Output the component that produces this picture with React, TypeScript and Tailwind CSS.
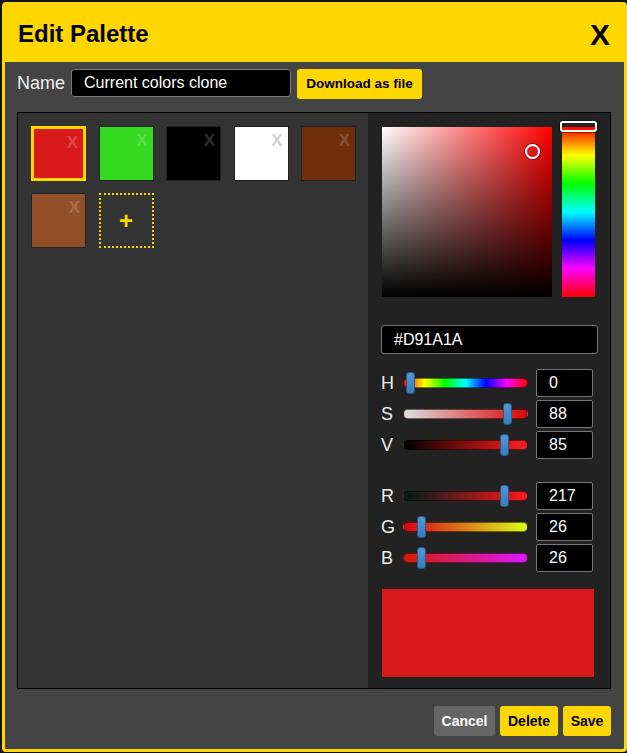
import React from "react";

const swatches = [
  { c: "bg-[#d91a1a]", sel: true, light: false },
  { c: "bg-[#35d91f]", sel: false, light: false },
  { c: "bg-[#000000]", sel: false, light: false },
  { c: "bg-[#ffffff]", sel: false, light: true },
  { c: "bg-[#6e2e0b]", sel: false, light: false },
  { c: "bg-[#925028]", sel: false, light: false },
];

type Row = { l: string; v: string; f: number; g: string };

const hsv: Row[] = [
  { l: "H", v: "0", f: 0, g: "bg-[linear-gradient(to_right,#f00,#ff0,#0f0,#0ff,#00f,#f0f,#f00)]" },
  { l: "S", v: "88", f: 0.88, g: "bg-[linear-gradient(to_right,#dedede,#dd0505)]" },
  { l: "V", v: "85", f: 0.85, g: "bg-[linear-gradient(to_right,#000,#ff1f1f)]" },
];

const rgb: Row[] = [
  { l: "R", v: "217", f: 217 / 255, g: "bg-[linear-gradient(to_right,#001a1a,#ff1a1a)]" },
  { l: "G", v: "26", f: 26 / 255, g: "bg-[linear-gradient(to_right,#d9001a,#d9ff1a)]" },
  { l: "B", v: "26", f: 26 / 255, g: "bg-[linear-gradient(to_right,#d91a00,#d91aff)]" },
];

function SliderRow({ r }: { r: Row }) {
  return (
    <div className="flex items-center h-[28px]">
      <div className="w-[22px] text-[18px] text-[#eee] leading-none">{r.l}</div>
      <div className="relative w-[125px] h-[10px]">
        <div className={`absolute inset-0 rounded-full border border-black/50 ${r.g}`} />
        <div
          className="absolute top-[-6px] w-[9px] h-[22px] rounded-[3px] border border-[#245b8c] bg-[linear-gradient(to_bottom,#5196d6,#3a7cbc)]"
          style={{ left: `${2.5 + r.f * 111}px` }}
        />
      </div>
      <div className="ml-[8px] w-[57px] h-[28px] bg-black border border-[#777] rounded-[2px] pl-[12px] flex items-center text-[16px] text-white">
        {r.v}
      </div>
    </div>
  );
}

export default function App() {
  return (
    <div className="w-[627px] h-[753px] bg-[#111] pt-[2px] pl-[2px] font-['Liberation_Sans',Arial,sans-serif] overflow-hidden">
      <div className="w-[625px] h-[750px] border-[3px] border-[#ffd700] rounded-[4px] bg-[#444] flex flex-col overflow-hidden">
        {/* Header */}
        <div className="h-[57px] shrink-0 bg-[#ffd700] flex items-center justify-between pl-[13px] pr-[14px]">
          <div className="text-[24px] font-bold text-black leading-none">Edit Palette</div>
          <div className="text-[30px] font-bold text-black leading-none mt-[2px]">X</div>
        </div>

        {/* Name row */}
        <div className="flex items-start pl-[12px] mt-[7px]">
          <div className="h-[28px] flex items-center text-[18px] text-[#eee] leading-none">Name</div>
          <div className="ml-[6px] w-[220px] h-[28px] bg-black border border-[#777] rounded-[3px] pl-[12px] flex items-center text-[16px] text-white">
            Current colors clone
          </div>
          <div className="ml-[6px] w-[125px] h-[30px] bg-[#ffd700] rounded-[3px] flex items-center justify-center text-[13.5px] font-bold text-black">
            Download as file
          </div>
        </div>

        {/* Main panel */}
        <div className="ml-[12px] mt-[13px] w-[594px] h-[577px] border border-black flex">
          <div className="w-[350px] bg-[#333] pl-[13px] pt-[13px]">
            <div className="flex flex-wrap gap-x-[12.5px] gap-y-[12px]">
              {swatches.map((s, i) => (
                <div
                  key={i}
                  className={`relative w-[55px] h-[55px] box-border ${s.c} ${
                    s.sel ? "border-[3px] border-[#ffd700]" : "border border-[#222]"
                  }`}
                >
                  <span
                    className={`absolute top-[5px] right-[5px] text-[17px] font-bold leading-none ${
                      s.light ? "text-black/20" : "text-white/20"
                    } ${s.sel ? "top-[4px] right-[3px]" : ""}`}
                  >
                    X
                  </span>
                </div>
              ))}
              <div className="w-[55px] h-[55px] box-border border-2 border-dotted border-[#ffd700] flex items-center justify-center">
                <span className="text-[24px] font-bold text-[#ffd700] leading-none">+</span>
              </div>
            </div>
          </div>

          <div className="flex-1 bg-[#222] pl-[13px] pt-[14px]">
            <div className="flex ml-[1px]">
              <div className="relative w-[170px] h-[170px] bg-[linear-gradient(to_right,#fff,#f00)]">
                <div className="absolute inset-0 bg-[linear-gradient(to_top,#000,transparent)]" />
                <div className="absolute left-[143px] top-[17px] w-[15px] h-[15px] rounded-full border-2 border-white shadow-[0_0_1px_1px_rgba(0,0,0,0.4)]" />
              </div>
              <div className="relative ml-[10px] w-[33px] h-[170px] bg-[linear-gradient(to_bottom,#f00,#ff0,#0f0,#0ff,#00f,#f0f,#f00)]">
                <div className="absolute top-[-6px] left-[-2px] w-[37px] h-[11px] rounded-[3px] border-2 border-white shadow-[0_0_1px_1px_rgba(0,0,0,0.5)]" />
              </div>
            </div>

            <div className="mt-[28px] w-[217px] h-[29px] bg-black border border-[#777] rounded-[3px] pl-[12px] flex items-center text-[16px] text-white">
              #D91A1A
            </div>

            <div className="mt-[15px] flex flex-col gap-[3px]">
              {hsv.map((r) => (
                <SliderRow key={r.l} r={r} />
              ))}
            </div>
            <div className="mt-[23px] flex flex-col gap-[3px]">
              {rgb.map((r) => (
                <SliderRow key={r.l} r={r} />
              ))}
            </div>

            <div className="mt-[17px] ml-[1px] w-[212px] h-[88px] bg-[#d91a1a]" />
          </div>
        </div>

        {/* Footer */}
        <div className="flex justify-end gap-[5px] pr-[13px] mt-[17px]">
          <div className="w-[61px] h-[30px] bg-[#666] rounded-[3px] flex items-center justify-center text-[14px] font-bold text-white">
            Cancel
          </div>
          <div className="w-[58px] h-[30px] bg-[#ffd700] rounded-[3px] flex items-center justify-center text-[14px] font-bold text-black">
            Delete
          </div>
          <div className="w-[48px] h-[30px] bg-[#ffd700] rounded-[3px] flex items-center justify-center text-[14px] font-bold text-black">
            Save
          </div>
        </div>
      </div>
    </div>
  );
}
